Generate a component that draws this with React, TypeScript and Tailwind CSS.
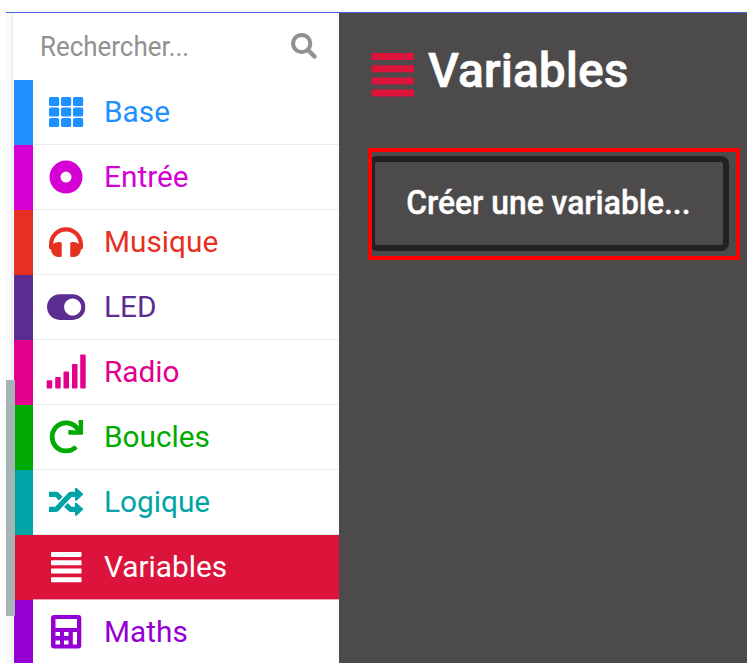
import type { ReactNode } from "react";
import { FaHeadphones, FaRedo, FaToggleOn } from "react-icons/fa";

type Category = {
  name: string;
  bar: string;
  text: string;
  icon: ReactNode;
  selected?: boolean;
};

// Icons are drawn in a 42 x 65 cell, one cell per row.
const categories: Category[] = [
  {
    name: "Base",
    bar: "bg-[#1e90ff]",
    text: "text-[#1e90ff]",
    icon: [17.5, 28, 38.5].map((y) =>
      [3, 15, 27].map((x) => <rect key={`${x}-${y}`} x={x} y={y} width="10.2" height="9" rx="1.6" />),
    ),
  },
  {
    name: "Entrée",
    bar: "bg-[#d400d4]",
    text: "text-[#d400d4]",
    icon: <circle cx="20" cy="32.5" r="11" fill="none" stroke="currentColor" strokeWidth="11" />,
  },
  {
    name: "Musique",
    bar: "bg-[#e63022]",
    text: "text-[#e63022]",
    icon: <FaHeadphones x="3" y="15.5" size={34} />,
  },
  {
    name: "LED",
    bar: "bg-[#5c2d91]",
    text: "text-[#5c2d91]",
    icon: <FaToggleOn x="1" y="13.2" size={38.5} />,
  },
  {
    name: "Radio",
    bar: "bg-[#e3008c]",
    text: "text-[#e3008c]",
    icon: (
      <>
        <rect x="0.7" y="40.7" width="5.5" height="8.3" rx="0.8" />
        <rect x="9.2" y="37.5" width="5.5" height="11.5" rx="0.8" />
        <rect x="17.5" y="32" width="5.5" height="17" rx="0.8" />
        <rect x="26" y="24.5" width="5.5" height="24.5" rx="0.8" />
        <rect x="34.2" y="15" width="5.5" height="34" rx="0.8" />
      </>
    ),
  },
  {
    name: "Boucles",
    bar: "bg-[#00aa00]",
    text: "text-[#00aa00]",
    icon: <FaRedo x="3.2" y="15.3" size={34} />,
  },
  {
    name: "Logique",
    bar: "bg-[#00a4a6]",
    text: "text-[#00a4a6]",
    icon: (
      <g stroke="currentColor" strokeLinejoin="round">
        <path d="M3 24.7H10.5L14.7 29M3 39.7H10.5L24.5 24.700H31M20 35.200L24.5 39.7H31" fill="none" strokeWidth="5.2" />
        <path d="M30 19.2L36 24.700L30 30.200ZM30 34.200L36 39.7L30 45.200Z" strokeWidth="2.2" />
      </g>
    ),
  },
  {
    name: "Variables",
    bar: "bg-[#dc143c]",
    text: "text-white",
    selected: true,
    icon: [17.3, 25.7, 34, 42.7].map((y) => <rect key={y} x="5" y={y} width="30.5" height="5" rx="0.8" />),
  },
  {
    name: "Maths",
    bar: "bg-[#9400d3]",
    text: "text-[#9400d3]",
    icon: (
      <path
        fillRule="evenodd"
        d="M8 15.3H32.3a3 3 0 0 1 3 3V46a3 3 0 0 1-3 3H8a3 3 0 0 1-3-3V18.3a3 3 0 0 1 3-3ZM9.5 19.3V28.3H31V19.3ZM9.5 32.5V36.5H14V32.5ZM18 32.5V36.5H22.5V32.5ZM26.8 32.5V45H31V32.5ZM9.5 41V45H14V41ZM18 41V45H22.5V41Z"
      />
    ),
  },
];

function CategoryRow({ name, bar, text, icon, selected }: Category) {
  return (
    <li className={`flex h-[65px] shrink-0 ${text}`}>
      <div className={`w-[19px] shrink-0 ${bar}`} />
      <div
        className={`flex flex-1 items-center border-b pl-[13px] ${
          selected ? "border-[#f0a0b0] bg-[#dc143c]" : "border-[#e8edee]"
        }`}
      >
        <svg className="h-[65px] w-[42px] shrink-0" viewBox="0 -0.6 42 65" fill="currentColor">
          {icon}
        </svg>
        <span className="mt-0.5 ml-4 origin-left scale-x-[1.01] text-[29.5px] leading-none whitespace-nowrap">
          {name}
        </span>
      </div>
    </li>
  );
}

export default function App() {
  return (
    <div className="h-[669px] w-[754px] overflow-hidden bg-white pt-3 pl-1.5 font-[Roboto,sans-serif]">
      <div className="relative flex h-[651px] w-[741px] overflow-hidden border-t border-[#4263e0]">
        <div className="w-[7px] shrink-0 border-r-2 border-[#eeeff3] bg-[#fbfbfe]" />
        <aside className="ml-px flex w-[325px] shrink-0 flex-col">
          <div className="flex h-[66.5px] shrink-0 items-center pl-[26px] text-[#919191]">
            <span className="mt-0.5 w-[251px] origin-left scale-x-[0.96] text-[27px] leading-none">Rechercher...</span>
            <svg className="h-7 w-7" viewBox="0 0 28 28" fill="none" stroke="currentColor">
              <circle cx="10.7" cy="11.5" r="8.6" strokeWidth="4" />
              <path d="M17.5 18.5 L23.5 24.5" strokeWidth="4.5" strokeLinecap="round" />
            </svg>
          </div>
          <ul className="flex flex-col">
            {categories.map((category) => (
              <CategoryRow key={category.name} {...category} />
            ))}
          </ul>
        </aside>
        <main className="flex-1 bg-[#4c4a4a] pl-[29px] text-white">
          <header className="flex h-[135px] pl-[3px]">
            <svg className="mt-10 h-11 w-[43px] text-[#dc143c]" viewBox="0 0 43 44" fill="currentColor">
              {[0, 12.2, 24.4, 36.6].map((y) => (
                <rect key={y} x="0.5" y={y} width="42.5" height="7" rx="1" />
              ))}
            </svg>
            <h1 className="mt-[34px] ml-3.5 origin-left text-[48px] leading-[48px] font-medium [-webkit-text-stroke:0.6px_white]">
              Variables
            </h1>
          </header>
          <div className="h-[112px] w-[372px] overflow-hidden rounded-[1px] border-4 border-[#fe0000] pt-1">
            <button className="-ml-[3px] flex h-[95px] w-[360px] items-center justify-center rounded-[8px] border-[6px] border-[#222222] pr-px pb-0.5">
              <span className="scale-x-[0.965] text-[33px] leading-none font-medium whitespace-nowrap [-webkit-text-stroke:0.4px_white]">
                Créer une variable...
              </span>
            </button>
          </div>
        </main>
        <div className="absolute top-[367px] left-0 h-[236px] w-[9px] bg-[#a5b4b5]" />
      </div>
    </div>
  );
}
